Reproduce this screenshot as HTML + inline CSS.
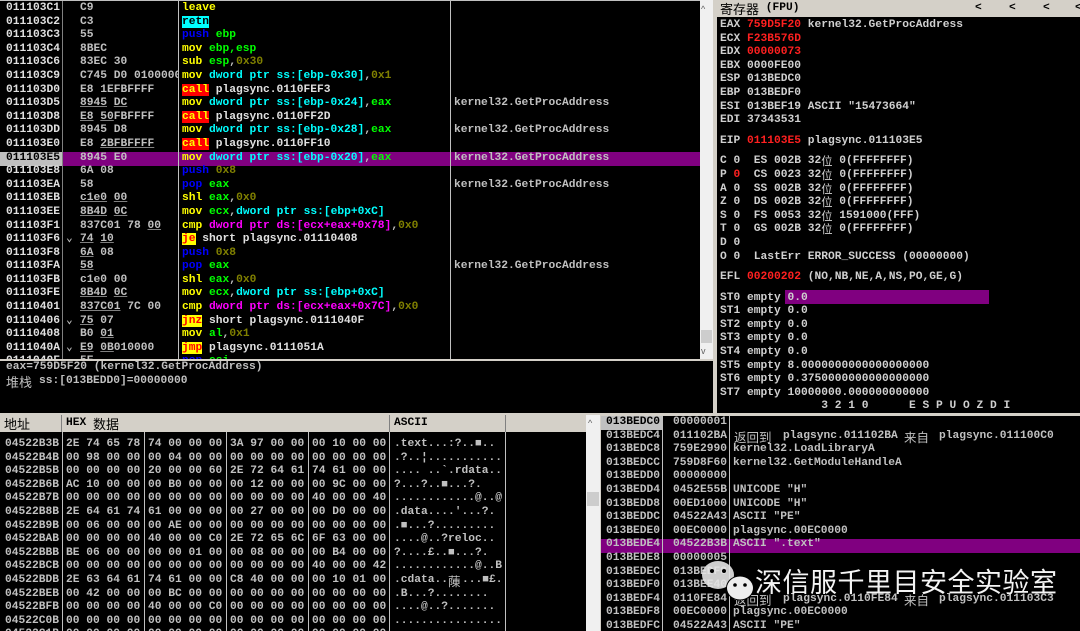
<!DOCTYPE html>
<html><head><meta charset="utf-8"><style>
*{margin:0;padding:0;box-sizing:border-box}
body{width:1080px;height:631px;background:#d4d0c8;position:relative;overflow:hidden;font:bold 11.25px "Liberation Mono","Noto Sans CJK SC",monospace;color:#c0c0c0}
.p{position:absolute;background:#000;overflow:hidden}
.c{position:absolute;white-space:pre;line-height:13.6px}
.c div{height:13.6px;line-height:13.6px;overflow:visible}
.c div.f{display:flex;align-items:center}
.f span{white-space:pre;line-height:13.6px}
.c div.a{position:relative}
.a span{position:absolute;top:0;height:13.6px;line-height:13.6px;white-space:pre}
.vl{position:absolute;width:1px;background:#808080}
.y{color:#ffff00}.b{color:#0000ff}.g{color:#00ff00}.cy{color:#00ffff}.m{color:#ff00ff}.o{color:#808000}.w{color:#e0e0e0}.r{color:#ff2020}
.call{background:#ff0000;color:#ffff00}.jj{background:#ffff00;color:#ff0000}.rt{background:#00ffff;color:#000}
.u{text-decoration:underline;text-decoration-color:#808080}
.hd{position:absolute;background:#d4d0c8;color:#000;font-weight:bold;line-height:17px;height:17px;padding-left:4px;border-right:1px solid #808080}
.cjk{font-family:"Noto Sans CJK SC",sans-serif;font-weight:normal;display:inline-block;height:13.6px;line-height:13.6px;vertical-align:top;overflow:visible}
.a .cjk{display:block;font-size:12.5px}
</style></head><body>

<!-- Disassembly pane -->
<div class="p" style="left:0;top:0;width:700px;height:359px;border-top:1px solid #c0c0c0">
 <div style="position:absolute;left:0;top:151px;width:700px;height:14px;background:#800080"></div>
 <div style="position:absolute;left:0;top:151px;width:62px;height:14px;background:#c0c0c0"></div>
 <div class="vl" style="left:62px;top:0;height:359px"></div>
 <div class="vl" style="left:178px;top:0;height:359px;background:#c0c0c0"></div>
 <div class="vl" style="left:450px;top:0;height:359px;background:#c0c0c0"></div>
 <div class="c w" style="left:6px;top:1px"><div>011103C1</div><div>011103C2</div><div>011103C3</div><div>011103C4</div><div>011103C6</div><div>011103C9</div><div>011103D0</div><div>011103D5</div><div>011103D8</div><div>011103DD</div><div>011103E0</div><div style="color:#000">011103E5</div><div>011103E8</div><div>011103EA</div><div>011103EB</div><div>011103EE</div><div>011103F1</div><div>011103F6</div><div>011103F8</div><div>011103FA</div><div>011103FB</div><div>011103FE</div><div>01110401</div><div>01110406</div><div>01110408</div><div>0111040A</div><div>0111040F</div></div>
 <div class="c" style="left:66px;top:1px;width:112px;overflow:hidden"><div>     </div><div></div><div></div><div></div><div></div><div></div><div></div><div></div><div></div><div></div><div></div><div></div><div></div><div></div><div></div><div></div><div></div><div>⌄</div><div></div><div></div><div></div><div></div><div></div><div>⌄</div><div></div><div>⌄</div></div>
 <div class="c" style="left:80px;top:1px;width:98px;overflow:hidden"><div>C9</div><div>C3</div><div>55</div><div>8BEC</div><div>83EC 30</div><div>C745 D0 01000000</div><div>E8 1EFBFFFF</div><div><span class="u">8945</span> <span class="u">DC</span></div><div><span class="u">E8</span> <span class="u">50</span>FBFFFF</div><div>8945 D8</div><div>E8 <span class="u">2BFBFFFF</span></div><div>8945 E0</div><div>6A 08</div><div>58</div><div><span class="u">c1e0</span> <span class="u">00</span></div><div><span class="u">8B4D</span> <span class="u">0C</span></div><div>837C01 78 <span class="u">00</span></div><div><span class="u">74</span> <span class="u">10</span></div><div><span class="u">6A</span> 08</div><div><span class="u">58</span></div><div>c1e0 00</div><div><span class="u">8B4D</span> <span class="u">0C</span></div><div><span class="u">837C01</span> 7C 00</div><div><span class="u">75</span> 07</div><div>B0 <span class="u">01</span></div><div><span class="u">E9</span> <span class="u">0B</span>010000</div><div>5E</div></div>
 <div class="c" style="left:182px;top:1px;width:268px;overflow:hidden"><div class="y">leave</div><div><span class="rt">retn</span></div><div><span class="b">push</span> <span class="g">ebp</span></div><div><span class="y">mov</span> <span class="g">ebp,esp</span></div><div><span class="y">sub</span> <span class="g">esp</span>,<span class="o">0x30</span></div><div><span class="y">mov</span> <span class="cy">dword ptr ss:[ebp-0x30]</span>,<span class="o">0x1</span></div><div><span class="call">call</span> <span class="w">plagsync.0110FEF3</span></div><div><span class="y">mov</span> <span class="cy">dword ptr ss:[ebp-0x24]</span>,<span class="g">eax</span></div><div><span class="call">call</span> <span class="w">plagsync.0110FF2D</span></div><div><span class="y">mov</span> <span class="cy">dword ptr ss:[ebp-0x28]</span>,<span class="g">eax</span></div><div><span class="call">call</span> <span class="w">plagsync.0110FF10</span></div><div><span class="y">mov</span> <span class="cy">dword ptr ss:[ebp-0x20]</span>,<span class="g">eax</span></div><div><span class="b">push</span> <span class="o">0x8</span></div><div><span class="b">pop</span> <span class="g">eax</span></div><div><span class="y">shl</span> <span class="g">eax</span>,<span class="o">0x0</span></div><div><span class="y">mov</span> <span class="g">ecx</span>,<span class="cy">dword ptr ss:[ebp+0xC]</span></div><div><span class="y">cmp</span> <span class="m">dword ptr ds:[ecx+eax+0x78]</span>,<span class="o">0x0</span></div><div><span class="jj">je</span> <span class="w">short plagsync.01110408</span></div><div><span class="b">push</span> <span class="o">0x8</span></div><div><span class="b">pop</span> <span class="g">eax</span></div><div><span class="y">shl</span> <span class="g">eax</span>,<span class="o">0x0</span></div><div><span class="y">mov</span> <span class="g">ecx</span>,<span class="cy">dword ptr ss:[ebp+0xC]</span></div><div><span class="y">cmp</span> <span class="m">dword ptr ds:[ecx+eax+0x7C]</span>,<span class="o">0x0</span></div><div><span class="jj">jnz</span> <span class="w">short plagsync.0111040F</span></div><div><span class="y">mov</span> <span class="g">al</span>,<span class="o">0x1</span></div><div><span class="jj">jmp</span> <span class="w">plagsync.0111051A</span></div><div><span class="b">pop</span> <span class="g">esi</span></div></div>
 <div class="c" style="left:454px;top:1px"><div></div><div></div><div></div><div></div><div></div><div></div><div></div><div>kernel32.GetProcAddress</div><div></div><div>kernel32.GetProcAddress</div><div></div><div>kernel32.GetProcAddress</div><div></div><div>kernel32.GetProcAddress</div><div></div><div></div><div></div><div></div><div></div><div>kernel32.GetProcAddress</div></div>
</div>
<!-- disasm scrollbar -->
<div style="position:absolute;left:700px;top:0;width:13px;height:359px;background:#f0f0f0"></div>
<div style="position:absolute;left:701px;top:4px;font:9px 'Liberation Sans';color:#606060">^</div>
<div style="position:absolute;left:701px;top:330px;width:11px;height:13px;background:#cdcdcd"></div>
<div style="position:absolute;left:701px;top:346px;font:9px 'Liberation Sans';color:#606060">v</div>

<!-- Info pane -->
<div class="p" style="left:0;top:361px;width:713px;height:52px">
 <div class="c" style="left:6px;top:0"><div>eax=759D5F20 (kernel32.GetProcAddress)</div><div class="a"><span class="cjk" style="left:0;font-size:13px">堆栈</span><span style="left:33px">ss:[013BEDD0]=00000000</span></div></div>
</div>

<!-- Registers pane -->
<div class="p" style="left:717px;top:0;width:363px;height:413px">
 <div style="position:absolute;left:0;top:0;width:363px;height:17px;background:#d4d0c8;color:#000;line-height:17px;padding-left:3px"><span class="cjk" style="font-size:13px;height:17px;line-height:17px">寄存器</span> (FPU)<span style="position:absolute;left:258px">&lt;</span><span style="position:absolute;left:292px">&lt;</span><span style="position:absolute;left:326px">&lt;</span><span style="position:absolute;left:358px">&lt;</span></div>
 <div style="position:absolute;left:68px;top:290px;width:204px;height:14px;background:#800080"></div>
 <div class="c" style="left:3px;top:19px;color:#d0d0d0"><div>EAX <span class="r">759D5F20</span> kernel32.GetProcAddress</div><div>ECX <span class="r">F23B576D</span></div><div>EDX <span class="r">00000073</span></div><div>EBX 0000FE00</div><div>ESP 013BEDC0</div><div>EBP 013BEDF0</div><div>ESI 013BEF19 ASCII "15473664"</div><div>EDI 37343531</div><div style="height:7px"></div><div>EIP <span class="r">011103E5</span> plagsync.011103E5</div><div style="height:7px"></div><div>C 0  ES 002B 32<span class="cjk">位</span> 0(FFFFFFFF)</div><div>P <span class="r">0</span>  CS 0023 32<span class="cjk">位</span> 0(FFFFFFFF)</div><div>A 0  SS 002B 32<span class="cjk">位</span> 0(FFFFFFFF)</div><div>Z 0  DS 002B 32<span class="cjk">位</span> 0(FFFFFFFF)</div><div>S 0  FS 0053 32<span class="cjk">位</span> 1591000(FFF)</div><div>T 0  GS 002B 32<span class="cjk">位</span> 0(FFFFFFFF)</div><div>D 0</div><div>O 0  LastErr ERROR_SUCCESS (00000000)</div><div style="height:7px"></div><div>EFL <span class="r">00200202</span> (NO,NB,NE,A,NS,PO,GE,G)</div><div style="height:7px"></div><div>ST0 empty 0.0</div><div>ST1 empty 0.0</div><div>ST2 empty 0.0</div><div>ST3 empty 0.0</div><div>ST4 empty 0.0</div><div>ST5 empty 8.0000000000000000000</div><div>ST6 empty 0.3750000000000000000</div><div>ST7 empty 10000000.000000000000</div><div>               3 2 1 0      E S P U O Z D I</div></div>
</div>

<!-- Dump pane -->
<div class="p" style="left:0;top:415px;width:586px;height:216px">
 <div class="hd" style="left:0;top:0;width:62px"><span class="cjk" style="font-size:13px;height:17px;line-height:17px">地址</span></div>
 <div class="hd" style="left:62px;top:0;width:328px">HEX <span class="cjk" style="font-size:13px;height:17px;line-height:17px">数据</span></div>
 <div class="hd" style="left:390px;top:0;width:116px">ASCII</div>
 <div class="hd" style="left:506px;top:0;width:80px;border:0"></div>
 <div class="vl" style="left:62px;top:17px;height:200px;background:#c0c0c0"></div>
 <div class="vl" style="left:144px;top:17px;height:200px;background:#c0c0c0"></div>
 <div class="vl" style="left:226px;top:17px;height:200px;background:#c0c0c0"></div>
 <div class="vl" style="left:308px;top:17px;height:200px;background:#c0c0c0"></div>
 <div class="vl" style="left:389px;top:17px;height:200px;background:#c0c0c0"></div>
 <div class="vl" style="left:505px;top:17px;height:200px;background:#c0c0c0"></div>
 <div class="c" style="left:5px;top:23px"><div>04522B3B</div><div>04522B4B</div><div>04522B5B</div><div>04522B6B</div><div>04522B7B</div><div>04522B8B</div><div>04522B9B</div><div>04522BAB</div><div>04522BBB</div><div>04522BCB</div><div>04522BDB</div><div>04522BEB</div><div>04522BFB</div><div>04522C0B</div><div>04522C1B</div></div>
 <div class="c" style="left:66px;top:23px"><div>2E 74 65 78</div><div>00 98 00 00</div><div>00 00 00 00</div><div>AC 10 00 00</div><div>00 00 00 00</div><div>2E 64 61 74</div><div>00 06 00 00</div><div>00 00 00 00</div><div>BE 06 00 00</div><div>00 00 00 00</div><div>2E 63 64 61</div><div>00 42 00 00</div><div>00 00 00 00</div><div>00 00 00 00</div><div>00 00 00 00</div></div>
 <div class="c" style="left:148px;top:23px"><div>74 00 00 00</div><div>00 04 00 00</div><div>20 00 00 60</div><div>00 B0 00 00</div><div>00 00 00 00</div><div>61 00 00 00</div><div>00 AE 00 00</div><div>40 00 00 C0</div><div>00 00 01 00</div><div>00 00 00 00</div><div>74 61 00 00</div><div>00 BC 00 00</div><div>40 00 00 C0</div><div>00 00 00 00</div><div>00 00 00 00</div></div>
 <div class="c" style="left:230px;top:23px"><div>3A 97 00 00</div><div>00 00 00 00</div><div>2E 72 64 61</div><div>00 12 00 00</div><div>00 00 00 00</div><div>00 27 00 00</div><div>00 00 00 00</div><div>2E 72 65 6C</div><div>00 08 00 00</div><div>00 00 00 00</div><div>C8 40 00 00</div><div>00 00 00 00</div><div>00 00 00 00</div><div>00 00 00 00</div><div>00 00 00 00</div></div>
 <div class="c" style="left:312px;top:23px"><div>00 10 00 00</div><div>00 00 00 00</div><div>74 61 00 00</div><div>00 9C 00 00</div><div>40 00 00 40</div><div>00 D0 00 00</div><div>00 00 00 00</div><div>6F 63 00 00</div><div>00 B4 00 00</div><div>40 00 00 42</div><div>00 10 01 00</div><div>00 00 00 00</div><div>00 00 00 00</div><div>00 00 00 00</div><div>00 00 00 00</div></div>
 <div class="c" style="left:394px;top:23px"><div>.text...:?..■..</div><div>.?..¦...........</div><div>.... ..`.rdata..</div><div>?...?..■...?.</div><div>............@..@</div><div>.data....'...?.</div><div>.■...?.........</div><div>....@..?reloc..</div><div>?....£..■...?.</div><div>............@..B</div><div class="a"><span style="left:0">.cdata..</span><span class="cjk" style="left:54px">蔯</span><span style="left:68px">...■£.</span></div><div>.B...?........</div><div>....@..?.......</div><div>................</div></div>
</div>
<div style="position:absolute;left:586px;top:415px;width:14px;height:216px;background:#f0f0f0"></div>
<div style="position:absolute;left:588px;top:418px;font:9px 'Liberation Sans';color:#606060">^</div>
<div style="position:absolute;left:587px;top:492px;width:12px;height:14px;background:#cdcdcd"></div>

<!-- Stack pane -->
<div class="p" style="left:601px;top:416px;width:479px;height:215px">
 <div style="position:absolute;left:0;top:0;width:61px;height:14px;background:#c0c0c0"></div>
 <div style="position:absolute;left:0;top:123px;width:479px;height:14px;background:#800080"></div>
 <div class="vl" style="left:61px;top:0;height:215px;background:#c0c0c0"></div>
 <div class="vl" style="left:128px;top:0;height:215px;background:#c0c0c0"></div>
 <div class="c" style="left:5px;top:0"><div style="color:#000">013BEDC0</div><div>013BEDC4</div><div>013BEDC8</div><div>013BEDCC</div><div>013BEDD0</div><div>013BEDD4</div><div>013BEDD8</div><div>013BEDDC</div><div>013BEDE0</div><div>013BEDE4</div><div>013BEDE8</div><div>013BEDEC</div><div>013BEDF0</div><div>013BEDF4</div><div>013BEDF8</div><div>013BEDFC</div></div>
 <div class="c" style="left:72px;top:0"><div>00000001</div><div>011102BA</div><div>759E2990</div><div>759D8F60</div><div>00000000</div><div>0452E55B</div><div>00ED1000</div><div>04522A43</div><div>00EC0000</div><div>04522B3B</div><div>00000005</div><div>013BEDF8</div><div>013BEE40</div><div>0110FE84</div><div>00EC0000</div><div>04522A43</div></div>
 <div class="c" style="left:132px;top:0;width:347px"><div></div><div class="a"><span class="cjk" style="left:1px">返回到</span><span style="left:50px">plagsync.011102BA</span><span class="cjk" style="left:171px">来自</span><span style="left:206px">plagsync.011100C0</span></div><div>kernel32.LoadLibraryA</div><div>kernel32.GetModuleHandleA</div><div></div><div>UNICODE "H"</div><div>UNICODE "H"</div><div>ASCII "PE"</div><div>plagsync.00EC0000</div><div>ASCII ".text"</div><div></div><div></div><div></div><div class="a"><span class="cjk" style="left:1px">返回到</span><span style="left:50px">plagsync.0110FE84</span><span class="cjk" style="left:171px">来自</span><span style="left:206px">plagsync.011103C3</span></div><div>plagsync.00EC0000</div><div>ASCII "PE"</div></div>
</div>

<!-- watermark -->
<svg style="position:absolute;left:700px;top:558px" width="60" height="45" viewBox="0 0 60 45">
 <ellipse cx="18" cy="17" rx="16" ry="14" fill="#e4e4e4" opacity="0.9"/>
 <circle cx="12" cy="13" r="2" fill="#000"/><circle cx="24" cy="13" r="2" fill="#000"/>
 <ellipse cx="40" cy="30" rx="14" ry="12.5" fill="#000"/>
 <ellipse cx="40" cy="30" rx="13" ry="11.5" fill="#eeeeee"/>
 <circle cx="35" cy="27" r="1.8" fill="#000"/><circle cx="45" cy="27" r="1.8" fill="#000"/>
</svg>
<div class="cjk" style="position:absolute;left:755px;top:564px;font-size:27px;height:34px;line-height:34px;color:#f4f4f4;letter-spacing:0.5px;white-space:nowrap">深信服千里目安全实验室</div>
</body></html>
